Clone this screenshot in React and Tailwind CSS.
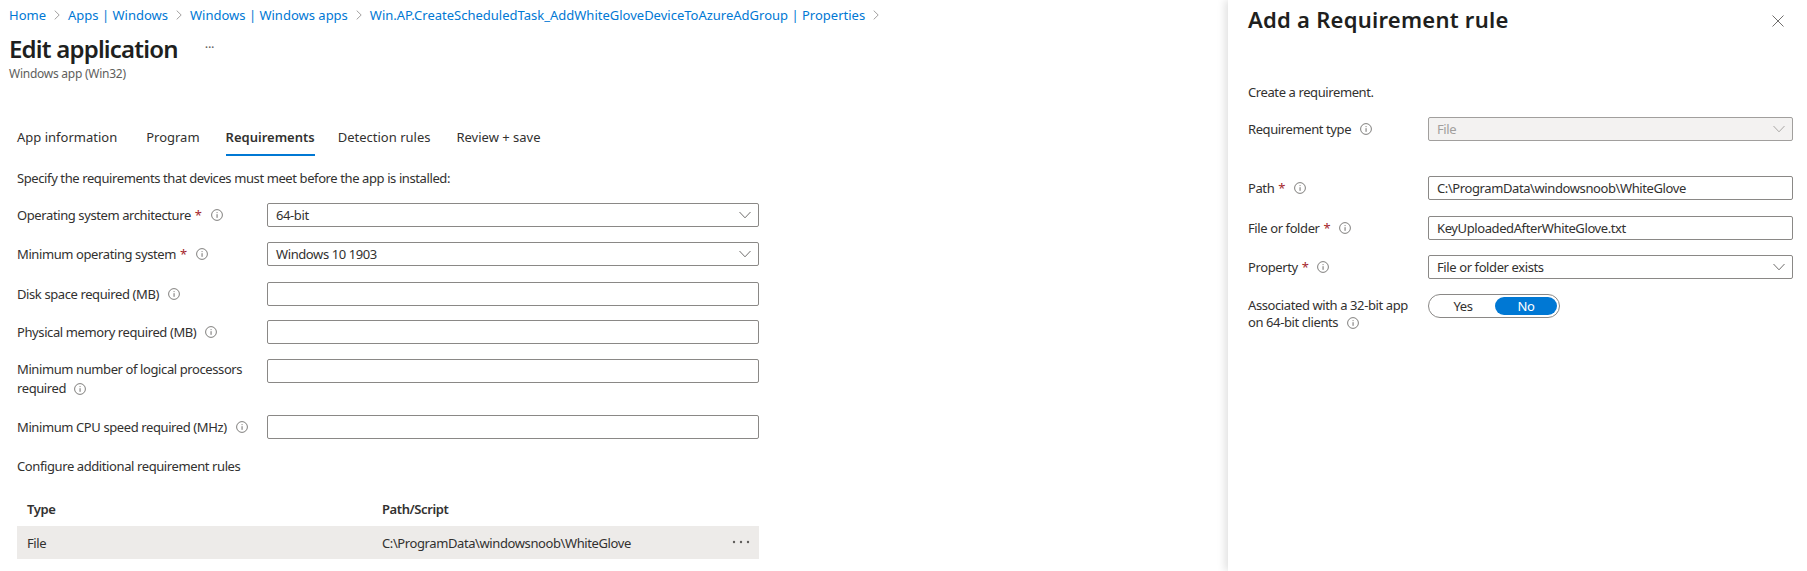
const Info = ({ className = "" }) => (
  <svg viewBox="0 0 12 12" className={`w-3 h-3 shrink-0 ${className}`} fill="none">
    <circle cx="6" cy="6" r="5.4" stroke="#605e5c" strokeWidth="0.8" />
    <rect x="5.6" y="5.2" width="0.9" height="3.6" fill="#605e5c" />
    <rect x="5.6" y="3.2" width="0.9" height="0.9" fill="#605e5c" />
  </svg>
);

const Chevron = ({ color = "#605e5c" }) => (
  <svg viewBox="0 0 12 8" className="w-3 h-2" fill="none">
    <path d="M0.5 1 L6 6.8 L11.5 1" stroke={color} strokeWidth="0.9" />
  </svg>
);

const Crumb = ({ children }) => (
  <>
    <span className="text-[#0078d4] tracking-[0px]">{children}</span>
    <svg viewBox="0 0 6 10" className="w-[6px] h-[10px] mx-[8px]" fill="none">
      <path d="M0.7 0.6 L5.2 5 L0.7 9.4" stroke="#8a8886" strokeWidth="0.8" />
    </svg>
  </>
);

const Star = () => <span className="text-[#a4262c] ml-[4px]">*</span>;

const Label = ({ children, req, gap = "ml-2" }) => (
  <span className="inline-flex items-center">
    {children}
    {req && <Star />}
    <Info className={req ? "ml-[9px]" : gap} />
  </span>
);

const Field = ({ value, select, disabled, w = "w-[492px]" }) => (
  <div
    className={`${w} h-6 shrink-0 rounded-[2px] border flex items-center justify-between pl-2 pr-[7px] ${
      disabled ? "bg-[#f3f2f1] border-[#a19f9d] text-[#a19f9d]" : "bg-white border-[#8a8886] text-[#323130]"
    }`}
  >
    <span>{value}</span>
    {select && <Chevron color={disabled ? "#a19f9d" : "#605e5c"} />}
  </div>
);

const Row = ({ label, req, value, select, mb, gap }) => (
  <div className={`flex items-start ${mb}`}>
    <div className="w-[250px] shrink-0 h-6 flex items-center">
      <Label req={req} gap={gap}>{label}</Label>
    </div>
    <Field value={value} select={select} />
  </div>
);

const Tab = ({ children, active, ml }) => (
  <div className={`${ml} h-[33px] pt-[5px] relative tracking-[0px] text-[#323130] ${active ? "font-semibold" : ""}`}>
    {children}
    {active && <div className="absolute left-0 right-0 bottom-0 h-[2px] bg-[#0078d4]" />}
  </div>
);

const PanelRow = ({ label, req, value, select, disabled, mb, gap }) => (
  <div className={`flex items-start ${mb}`}>
    <div className="w-[180px] shrink-0 h-6 flex items-center">
      <Label req={req} gap={gap}>{label}</Label>
    </div>
    <Field value={value} select={select} disabled={disabled} w="w-[365px]" />
  </div>
);

export default function App() {
  return (
    <div
      className="flex h-[571px] w-[1807px] overflow-hidden bg-white text-[13px] leading-[18px] text-[#323130] tracking-[-0.4px]"
      style={{ fontFamily: '"Noto Sans", "Open Sans", sans-serif' }}
    >
      <main className="w-[1228px] shrink-0">
        <nav className="flex items-center h-[18px] mt-[6px] pl-[9px]">
          <Crumb>Home</Crumb>
          <Crumb>Apps | Windows</Crumb>
          <Crumb>Windows | Windows apps</Crumb>
          <Crumb>Win.AP.CreateScheduledTask_AddWhiteGloveDeviceToAzureAdGroup | Properties</Crumb>
        </nav>
        <div className="pl-[9px] mt-[9px] flex items-center h-[32px]">
          <h1 className="text-[24px] leading-[32px] font-semibold text-[#201f1e] tracking-[-0.8px]">Edit application</h1>
          <span className="ml-[27px] text-[#605e5c] text-[13px] leading-none -mt-1">···</span>
        </div>
        <p className="pl-[9px] text-[12px] leading-4 text-[#605e5c] mt-[1px] tracking-[-0.25px]">Windows app (Win32)</p>
        <div className="pl-[17px] mt-[41px]">
          <div className="flex h-[33px] text-[#323130]">
            <Tab>App information</Tab>
            <Tab ml="ml-[29px]">Program</Tab>
            <Tab ml="ml-[26px]" active>Requirements</Tab>
            <Tab ml="ml-[23px]">Detection rules</Tab>
            <Tab ml="ml-[26px]">Review + save</Tab>
          </div>
          <p className="mt-[13px] mb-[16px]">Specify the requirements that devices must meet before the app is installed:</p>
          <Row label="Operating system architecture" req value="64-bit" select mb="mb-[15px]" />
          <Row label="Minimum operating system" req value="Windows 10 1903" select mb="mb-[16px]" />
          <Row label="Disk space required (MB)" mb="mb-[14px]" gap="ml-[9px]" />
          <Row label="Physical memory required (MB)" mb="mb-[15px]" gap="ml-[9px]" />
          <div className="flex items-start mb-[17px]">
            <div className="w-[250px] shrink-0 pt-[1px] leading-[19px]">
              Minimum number of logical processors
              <br />
              <span className="inline-flex items-center">required<Info className="ml-2" /></span>
            </div>
            <Field />
          </div>
          <Row label="Minimum CPU speed required (MHz)" mb="mb-[18px]" gap="ml-[9px]" />
          <p>Configure additional requirement rules</p>
          <div className="w-[742px] mt-[25px]">
            <div className="flex h-[18px] pl-[10px] font-semibold mb-[8px]">
              <span className="w-[355px]">Type</span>
              <span>Path/Script</span>
            </div>
            <div className="flex items-center h-[33px] pl-[10px] bg-[#edebe9]">
              <span className="w-[355px]">File</span>
              <span>C:\ProgramData\windowsnoob\WhiteGlove</span>
              <svg viewBox="0 0 18 4" className="w-[18px] h-1 ml-auto mr-[9px] -mt-[2px]" fill="#605e5c">
                <circle cx="2" cy="2" r="1.2" />
                <circle cx="9" cy="2" r="1.2" />
                <circle cx="16" cy="2" r="1.2" />
              </svg>
            </div>
          </div>
        </div>
      </main>
      <aside className="flex-1 pl-[20px] pr-[14px] shadow-[-3px_0_8px_rgba(0,0,0,0.12)] relative bg-white">
        <div className="flex items-center justify-between h-[28px] mt-[5px] pr-[9px]">
          <h2 className="text-[22px] leading-[28px] font-semibold text-[#201f1e] tracking-[0.25px]">Add a Requirement rule</h2>
          <svg viewBox="0 0 12 12" className="w-3 h-3 mt-[3px]" fill="none">
            <path d="M0.5 0.5 L11.5 11.5 M11.5 0.5 L0.5 11.5" stroke="#605e5c" strokeWidth="0.9" />
          </svg>
        </div>
        <p className="mt-[50px] mb-[16px]">Create a requirement.</p>
        <PanelRow label="Requirement type" value="File" select disabled mb="mb-[35px]" gap="ml-[9px]" />
        <PanelRow label="Path" req value="C:\ProgramData\windowsnoob\WhiteGlove" mb="mb-[16px]" />
        <PanelRow label="File or folder" req value="KeyUploadedAfterWhiteGlove.txt" mb="mb-[15px]" />
        <PanelRow label="Property" req value="File or folder exists" select mb="mb-[15px]" />
        <div className="flex items-start">
          <div className="w-[180px] shrink-0 pt-[3px] leading-[17px]">
            Associated with a 32-bit app
            <br />
            <span className="inline-flex items-center">on 64-bit clients<Info className="ml-[9px]" /></span>
          </div>
          <div className="w-[132px] h-6 rounded-full border border-[#8a8886] flex items-center p-[2px] text-center">
            <span className="w-[64px]">Yes</span>
            <span className="flex-1 h-[18px] rounded-full bg-[#0078d4] text-white leading-[18px]">No</span>
          </div>
        </div>
      </aside>
    </div>
  );
}
